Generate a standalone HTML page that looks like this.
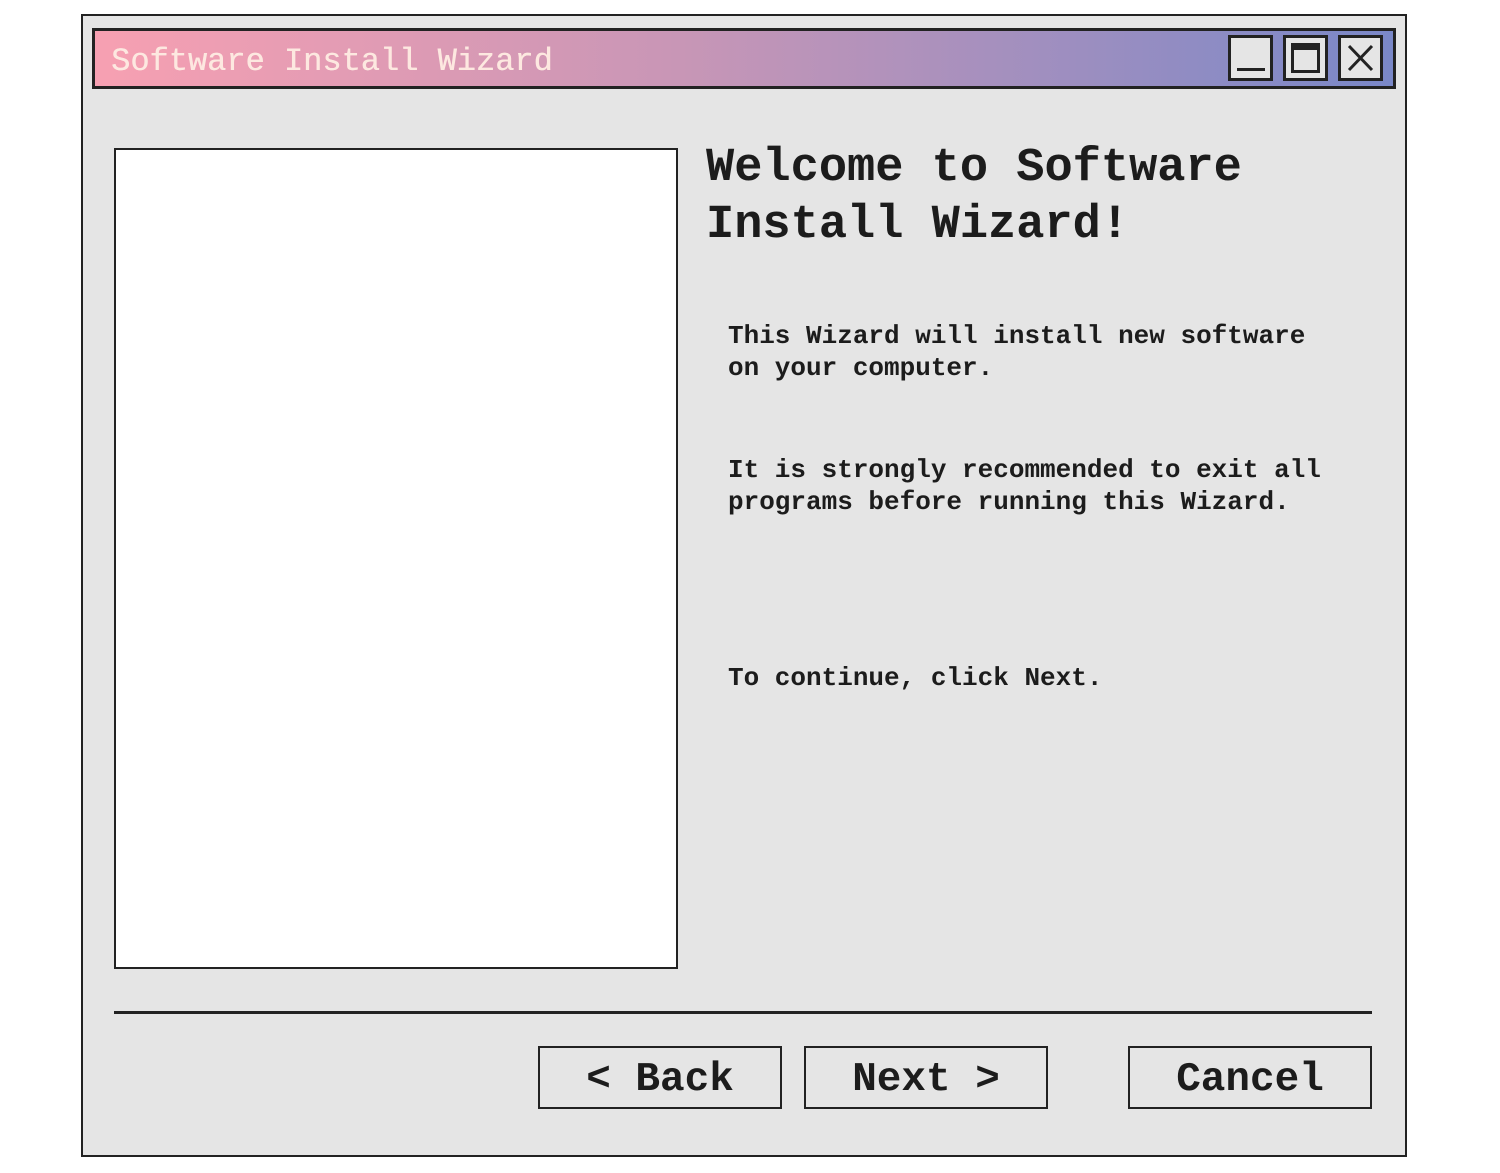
<!DOCTYPE html>
<html><head><style>
body{margin:0;width:1500px;height:1173px;background:#fff;position:relative;font-family:"Liberation Mono",monospace;color:#1c1c1c;overflow:hidden}
.a{position:absolute;box-sizing:border-box}
.win{left:81px;top:14px;width:1326px;height:1143px;border:2px solid #222;background:#e5e5e5}
.bar{left:92px;top:28px;width:1304px;height:61px;border:3px solid #222;background:linear-gradient(90deg,#f7a0b2 0%,#c896b6 45%,#7a88c8 100%)}
.ttl{left:111px;top:31px;height:61px;line-height:61px;font-size:32px;color:#fde8e0;white-space:pre;text-shadow:0.4px 0 0 #fde8e0}
.wb{top:35px;width:45px;height:46px;border:3px solid #222;background:#e5e5e5}
.pan{left:114px;top:148px;width:564px;height:821px;border:2px solid #222;background:#fff}
.h{left:706px;font-size:47px;font-weight:bold;line-height:57px;white-space:pre}
.p{left:728px;font-size:26px;font-weight:bold;line-height:32px;white-space:pre}
.btn{top:1046px;width:244px;height:63px;border:2.5px solid #222;text-align:center;line-height:64px;font-size:41px;font-weight:bold;white-space:pre}
</style></head><body>
<div class="a win"></div>
<div class="a bar"></div>
<div class="a ttl">Software Install Wizard</div>
<div class="a wb" style="left:1228px"><div class="a" style="left:6px;top:30px;width:28px;height:3px;background:#222"></div></div>
<div class="a wb" style="left:1283px"><div class="a" style="left:5px;top:5px;width:29px;height:30px;border:3px solid #222;border-top-width:7px"></div></div>
<div class="a wb" style="left:1338px"><svg class="a" style="left:0;top:0" width="39" height="40"><path d="M8 8L31 32M31 8L8 32" stroke="#222" stroke-width="3"/></svg></div>
<div class="a pan"></div>
<div class="a h" style="top:140px">Welcome to Software
Install Wizard!</div>
<div class="a p" style="top:320px">This Wizard will install new software
on your computer.</div>
<div class="a p" style="top:454px">It is strongly recommended to exit all
programs before running this Wizard.</div>
<div class="a p" style="top:662px">To continue, click Next.</div>
<div class="a" style="left:114px;top:1011px;width:1258px;height:3px;background:#222"></div>
<div class="a btn" style="left:538px">&lt; Back</div>
<div class="a btn" style="left:804px">Next &gt;</div>
<div class="a btn" style="left:1128px">Cancel</div>
</body></html>
